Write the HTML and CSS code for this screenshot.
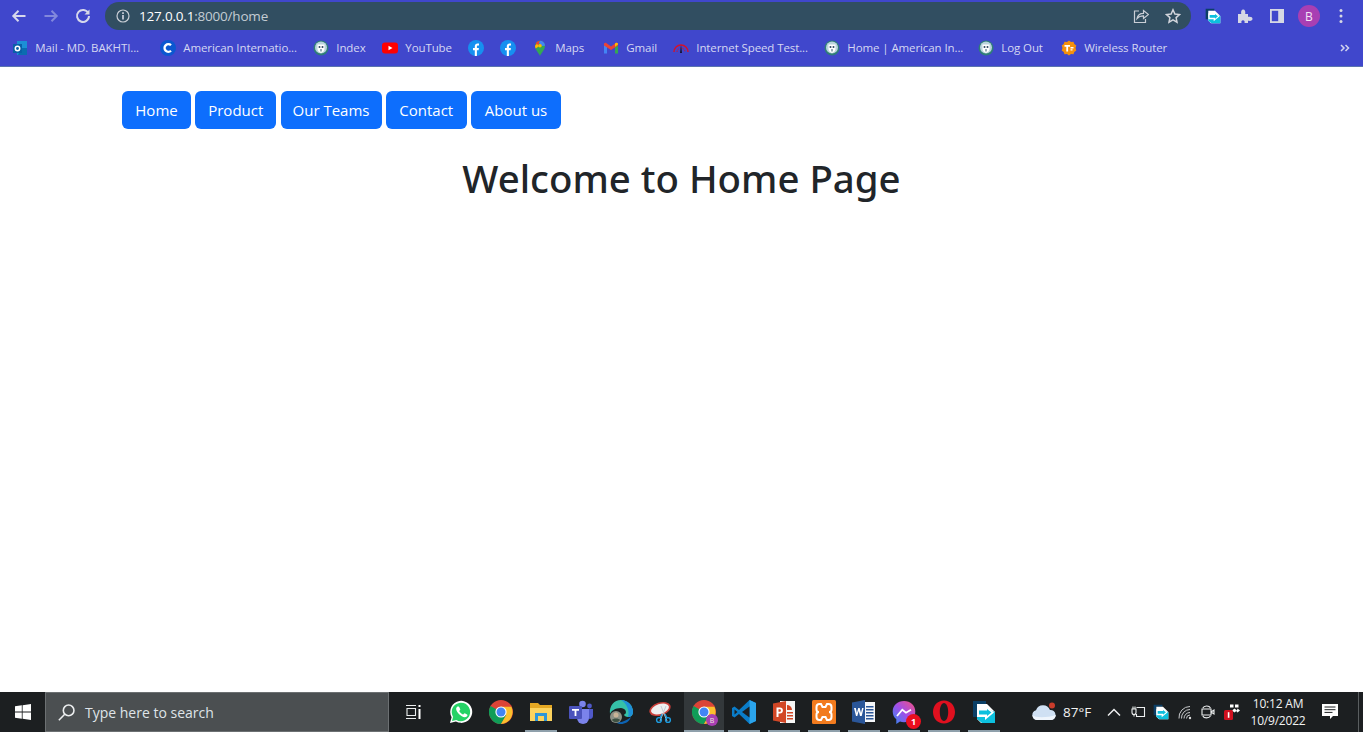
FILE: index.html
```html
<!DOCTYPE html>
<html lang="en">
<head>
<meta charset="utf-8">
<title>Home</title>
<link rel="stylesheet" href="styles.css">
</head>
<body>
<svg class="defs" width="0" height="0" aria-hidden="true">
  <defs>
    <symbol id="shield" viewBox="0 0 16 16">
      <circle cx="8" cy="8" r="7.500" fill="#2f7d78"/>
      <circle cx="8" cy="7.500" r="6" fill="#b9d3dc"/>
      <path d="M4.500 4.500h7v4.500c0 2-1.600 3-3.500 4-1.900-1-3.500-2-3.500-4z" fill="#fff"/>
      <circle cx="6.500" cy="7" r="1" fill="#2c4660"/>
      <circle cx="9.500" cy="7" r="1" fill="#2c4660"/>
      <path d="M7.200 9h1.600v2.500h-1.600z" fill="#7d97a8"/>
    </symbol>
    <symbol id="fb" viewBox="0 0 16 16">
      <circle cx="8" cy="8" r="8" fill="#1690f0"/>
      <path d="M6.800 16V10.300H5V8h1.800V6.300C6.800 4.400 7.900 3.400 9.600 3.400c.7 0 1.400.1 1.400.1v2h-.9c-.9 0-1.200.6-1.200 1.200V8h2l-.3 2.300H8.900V16z" fill="#fff"/>
    </symbol>
    <symbol id="chrome" viewBox="0 0 24 24">
      <circle cx="12" cy="12" r="12" fill="#db4437"/>
      <path d="M12 12 1.600 6A12 12 0 0 0 12 24l5.200-9z" fill="#0f9d58"/>
      <path d="M12 6.800h10.400A12 12 0 0 1 12 24l5.200-9z" fill="#fbc02d"/>
      <circle cx="12" cy="12" r="5.600" fill="#fff"/>
      <circle cx="12" cy="12" r="4.500" fill="#4285f4"/>
    </symbol>
    <symbol id="sendto" viewBox="0 0 24 24">
      <path d="M1 1h13v3H5v13H1z" fill="#0b3f66"/>
      <path d="M5 4h10l8 8v11H9l-4-4z" fill="#fff"/>
      <path d="M10 23l-5-4V14h7v-4l6 0 5 2v11z" fill="#0cc0de"/>
      <path d="M5 8h8V5l9 7.500-9 7.500v-3H5z" fill="#fff"/>
      <path d="M7 10.500h8V9l4.500 3.500L15 16v-1.500H7z" fill="#0cc0de"/>
    </symbol>
  </defs>
</svg>

<header class="chrome-bar">
  <div class="toolbar">
    <div class="nav-icons">
      <svg class="tool-icon" viewBox="0 0 16 16"><path d="M14.500 8H2.500M7.500 2.800 2.300 8l5.200 5.200" class="ln-light"/></svg>
      <svg class="tool-icon" viewBox="0 0 16 16"><path d="M1.500 8h12M8.500 2.800 13.700 8l-5.200 5.200" class="ln-dim"/></svg>
      <svg class="tool-icon" viewBox="0 0 16 16"><path d="M13.300 5.100A6 6 0 1 0 14 8" class="ln-light"/><path d="M14.500 1.500v5h-5z" class="fill-light"/></svg>
    </div>
    <div class="omnibox">
      <svg class="info-icon" viewBox="0 0 14 14"><circle cx="7" cy="7" r="6" class="ln-thin"/><path d="M6.200 6h1.600v4.500H6.200zM6.200 3.300h1.600v1.600H6.200z" class="fill-light"/></svg>
      <span class="url"><span class="url-host">127.0.0.1</span>:8000/home</span>
      <span class="omni-actions">
        <svg class="omni-icon" viewBox="0 0 16 16"><path d="M6 3H1.500v11.500h11V11" class="ln-thin"/><path d="M4 10.500c.6-3.300 3-5.200 6.500-5.200V2.500L15.500 6.500l-5 4V7.800C7.700 7.800 5.600 8.600 4 10.500z" class="ln-thin"/></svg>
        <svg class="omni-icon" viewBox="0 0 16 16"><path d="m8 1.800 1.900 4.200 4.600.5-3.400 3.100.9 4.600L8 11.900l-4 2.300.9-4.600L1.500 6.500l4.600-.5z" class="ln-star"/></svg>
      </span>
    </div>
    <div class="ext-icons">
      <svg class="ext-send" viewBox="0 0 24 24"><use href="#sendto"/></svg>
      <svg class="ext-puzzle" viewBox="0 0 16 16"><path d="M1 6h3.200c-.5-3 .4-4.500 2-4.500s2.500 1.500 2 4.500H11v2.800c3-.5 4.500.2 4.500 2s-1.500 2.500-4.500 2V15H7.500c.5-2-.2-2.800-1.500-2.800S4 13 4.500 15H1z" class="fill-light"/></svg>
      <svg class="ext-panel" viewBox="0 0 14 14"><path d="M0 0h14v14H0z" class="fill-light"/><path d="M1.800 1.800h6.400v10.400H1.800z" class="fill-bar"/></svg>
      <span class="avatar">B</span>
      <svg class="ext-dots" viewBox="0 0 4 16"><circle cx="2" cy="2.500" r="1.500" class="fill-light"/><circle cx="2" cy="8" r="1.500" class="fill-light"/><circle cx="2" cy="13.500" r="1.500" class="fill-light"/></svg>
    </div>
  </div>

  <nav class="bookmarks">
    <a class="bm"><svg class="bm-icon" viewBox="0 0 16 16"><path d="M5 1h10v14H5z" fill="#1c8fd6"/><path d="M9 8h6v7H6z" fill="#0b6cb0"/><path d="M1 4h9v9H1z" fill="#0a5ea8"/><circle cx="5.500" cy="8.500" r="2.200" fill="none" stroke="#fff" stroke-width="1.500"/></svg><span>Mail - MD. BAKHTI...</span></a>
    <a class="bm"><svg class="bm-icon" viewBox="0 0 16 16"><circle cx="8" cy="8" r="8" fill="#0b57d0"/><path d="M11 5.300a3.800 3.800 0 1 0 0 5.400" fill="none" stroke="#fff" stroke-width="2.300"/></svg><span>American Internatio...</span></a>
    <a class="bm"><svg class="bm-icon"><use href="#shield"/></svg><span>Index</span></a>
    <a class="bm"><svg class="bm-icon" viewBox="0 0 16 16"><rect y="2.500" width="16" height="11" rx="3" fill="#f00"/><path d="m6.500 5.700 4 2.300-4 2.300z" fill="#fff"/></svg><span>YouTube</span></a>
    <a class="bm"><svg class="bm-icon"><use href="#fb"/></svg></a>
    <a class="bm"><svg class="bm-icon"><use href="#fb"/></svg></a>
    <a class="bm"><svg class="bm-icon" viewBox="0 0 16 16"><path d="M8 16C6.800 12.800 3 10.300 3 5.800a5 5 0 0 1 10 0C13 10.300 9.200 12.800 8 16z" fill="#34a853"/><path d="M4.400 2.300A5 5 0 0 1 8 .8L5.500 7.500 3.200 7z" fill="#ea4335"/><path d="M8 .8a5 5 0 0 1 5 5L10 6 7 3z" fill="#4285f4"/><path d="M3 5.800c0 1 .3 2 .7 2.800L7 6 5 4z" fill="#fbbc04"/><circle cx="8" cy="5.800" r="1.800" fill="#fbbc04"/></svg><span>Maps</span></a>
    <a class="bm"><svg class="bm-icon" viewBox="0 0 16 16"><path d="M1 13.500V4.500l3 2.300v6.700z" fill="#4285f4"/><path d="M12 13.500V6.800l3-2.300v9z" fill="#34a853"/><path d="M1 3.500c.8-1 2-.8 2.600-.3L8 6.500l4.400-3.300c.6-.5 1.800-.7 2.600.3v2L8 10 1 5.500z" fill="#ea4335"/><path d="M12 6.800l3-2.300V3.500c-.8-1-2-.8-2.600-.3L12 3.500z" fill="#fbbc04"/></svg><span>Gmail</span></a>
    <a class="bm"><svg class="bm-icon" viewBox="0 0 16 16"><path d="M1 12a7 7 0 0 1 14 0" fill="none" stroke="#d5112b" stroke-width="1.500"/><path d="M4 12a4 4 0 0 1 8 0" fill="none" stroke="#d5112b" stroke-width="1" stroke-dasharray="1.500 1"/><path d="M7 13l1-8 1 8z" fill="#14142f"/></svg><span>Internet Speed Test...</span></a>
    <a class="bm"><svg class="bm-icon"><use href="#shield"/></svg><span>Home | American In...</span></a>
    <a class="bm"><svg class="bm-icon"><use href="#shield"/></svg><span>Log Out</span></a>
    <a class="bm"><svg class="bm-icon" viewBox="0 0 16 16"><path d="m8 .5 2 1.500 2.500-.3.800 2.300 2 1.500-.8 2.500.8 2.500-2 1.500-.8 2.300-2.500-.3L8 15.500l-2-1.500-2.500.3-.8-2.300-2-1.500.8-2.500-.8-2.500 2-1.500.8-2.300L6 2z" fill="#f4900c"/><path d="M3.500 5h5.500v1.700H7.100V11.500H5.300V6.700H3.500z" fill="#fff"/><path d="M9.500 7h3v1.500h-3zM9.500 9.300h2v1.300h-2z" fill="#fff"/></svg><span>Wireless Router</span></a>
    <svg class="bm-more" viewBox="0 0 10 10"><path d="M1 2l3 3-3 3M5.500 2l3 3-3 3" class="ln-more"/></svg>
  </nav>
</header>

<main class="page">
  <div class="nav-buttons">
    <a class="btn">Home</a>
    <a class="btn">Product</a>
    <a class="btn">Our Teams</a>
    <a class="btn">Contact</a>
    <a class="btn">About us</a>
  </div>
  <h1 class="title">Welcome to Home Page</h1>
</main>

<footer class="taskbar">
  <div class="start">
    <svg class="win-logo" viewBox="0 0 16 16"><path d="M0 2.300 6.800 1.300v6.300H0zM7.600 1.200 16 0v7.600H7.600zM0 8.400h6.800v6.300L0 13.700zM7.600 8.400H16V16L7.600 14.800z" fill="#fff"/></svg>
  </div>
  <div class="search">
    <svg class="search-icon" viewBox="0 0 16 16"><circle cx="10" cy="6" r="5" class="ln-white"/><path d="M6.300 9.700 .8 15.300" class="ln-white"/></svg>
    <span>Type here to search</span>
  </div>
  <div class="taskview">
    <svg class="taskview-icon" viewBox="0 0 16 16"><path d="M1 1.500h10M1 14.500h10M2 4.500h8.500v7H2z" class="ln-white-thin"/><path d="M13.500 1h2v2h-2zM13.500 5h2v10h-2z" fill="#fff"/></svg>
  </div>
  <div class="apps">
    <div class="app"><svg class="app-icon" viewBox="0 0 24 24"><path d="M1 23l1.600-5.800A11 11 0 1 1 6.900 21.500z" fill="#fff"/><path d="M3 21l1.100-4.200A9.200 9.200 0 1 1 7.300 19.900z" fill="#25d366"/><path d="M8.700 6.500c-.7.100-1.800 1.300-1.500 3 .4 2.300 4.700 7.500 8.600 7.700 1.700 0 2.700-1.300 2.700-2.300 0-.4-2.500-1.700-2.900-1.700-.4 0-1 1.200-1.500 1.300-1.100.1-3.600-2.300-3.800-3.400 0-.5 1-1 1-1.500s-1.200-3.100-1.600-3.100z" fill="#fff"/></svg></div>
    <div class="app"><svg class="app-icon"><use href="#chrome"/></svg></div>
    <div class="app is-open"><svg class="app-icon" viewBox="0 0 24 24"><path d="M1 3h8l2 2h12v16H1z" fill="#e5a823"/><path d="M1 8h22v13H1z" fill="#fcd35e"/><path d="M6 13h12v8h-3v-5H9v5H6z" fill="#2e96d8"/></svg></div>
    <div class="app"><svg class="app-icon" viewBox="0 0 24 24"><circle cx="13.500" cy="4" r="3.300" fill="#7b83eb"/><circle cx="20.500" cy="6" r="2.400" fill="#5059c9"/><path d="M18 9h6v7c0 2-1.500 3-3 3s-3-1-3-3z" fill="#5059c9"/><path d="M8 9h12v9a6 6 0 0 1-12 0z" fill="#7b83eb"/><rect y="6" width="13" height="13" rx="1" fill="#4b53bc"/><path d="M3 9h7v1.800H7.400V16H5.600v-5.200H3z" fill="#fff"/></svg></div>
    <div class="app"><svg class="app-icon" viewBox="0 0 24 24"><path d="M12 0a12 12 0 0 1 12 12c0 3-2 5-5 5-2 0-4-1-4-2.500 3 0 3-6-3-6.500C6 8 2 11 1 14 0 6 5 0 12 0z" fill="#35c1a8"/><path d="M12 0a12 12 0 0 1 12 12c0 3-2 5-5 5 2-5-1-14-7-17z" fill="#1f8fd8"/><path d="M22 17c-2 5-6 7-10 7-2 0-4-.6-5-2 5 1 10-1 15-5z" fill="#0c63b3"/><circle cx="7" cy="17" r="6" fill="#8d9186"/><path d="M3 20c1-2 7-2 8 0-2 3-6 3-8 0z" fill="#3e5143"/><circle cx="7" cy="15" r="2.500" fill="#c9b397"/></svg></div>
    <div class="app"><svg class="app-icon" viewBox="0 0 24 24"><ellipse cx="11" cy="9" rx="11" ry="6.500" fill="#c93f3a" transform="rotate(-18 11 9)"/><ellipse cx="11" cy="9" rx="9.300" ry="4.900" fill="#efeff0" transform="rotate(-18 11 9)"/><path d="M12 6l6 15M17 6l-6 15" stroke="#c4ccd6" stroke-width="1" fill="none"/><circle cx="10" cy="20" r="2.400" fill="none" stroke="#1d9ce0" stroke-width="1.400"/><circle cx="19" cy="20" r="2.400" fill="none" stroke="#1d9ce0" stroke-width="1.400"/><path d="M11 18l2-4M18 18l-2-4" stroke="#1d9ce0" stroke-width="1.400"/></svg></div>
    <div class="app is-active"><span class="badge-wrap"><svg class="app-icon"><use href="#chrome"/></svg><span class="chrome-badge">B</span></span></div>
    <div class="app is-open"><svg class="app-icon" viewBox="0 0 24 24"><path d="M17.500 0 24 3v18l-6.500 3L7 14l-4.500 3.500L0 16v-8l2.500-1.500L7 10z" fill="#0a7cc8"/><path d="M17.500 0 24 3v18l-6.500 3z" fill="#2ba4ec"/><path d="M17.500 6.500v11L10 12z" fill="#1c1f21"/><path d="M2.500 9.500v5L5.500 12z" fill="#1c1f21"/></svg></div>
    <div class="app is-open"><svg class="app-icon" viewBox="0 0 24 24"><path d="M8 1h15v22H8z" fill="#f6f6f6"/><path d="M15 5a5 5 0 0 1 5 5h-5z" fill="#d24726"/><path d="M15 12h6v1.500h-6zM15 15h6v1.500h-6zM15 18h6v1.500h-6z" fill="#d24726"/><path d="M1 3.500 14 1v22L1 20.500z" fill="#d24726"/><path d="M4.500 7.500h3.400c2 0 3 1 3 2.900s-1.200 3-3 3H6.500V17H4.500zm2 1.700v2.600h1.100c.9 0 1.300-.5 1.300-1.300s-.4-1.300-1.300-1.300z" fill="#fff"/></svg></div>
    <div class="app is-open"><svg class="app-icon" viewBox="0 0 24 24"><rect width="24" height="24" rx="1.500" fill="#f27b1e"/><path d="M4.500 7c0-2 1-3 3-3h1.500l1.500 3h3l1.500-3h1.500c2 0 3 1 3 3v2.500c0 1.200-1 2.500-2.500 2.500 1.500 0 2.500 1.300 2.500 2.500V17c0 2-1 3-3 3H15l-1.500-3h-3L9 20H7.500c-2 0-3-1-3-3v-2.500c0-1.200 1-2.500 2.500-2.500-1.500 0-2.500-1.300-2.500-2.500z" fill="none" stroke="#fff" stroke-width="2"/></svg></div>
    <div class="app is-open"><svg class="app-icon" viewBox="0 0 24 24"><path d="M9 2h14v20H9z" fill="#f4f6f9"/><path d="M14 6h7.500v1.500H14zM14 9h7.500v1.500H14zM14 12h7.500v1.500H14zM14 15h7.500v1.500H14zM14 18h7.500v1.500H14z" fill="#2a5699"/><path d="M0 2.500 13 0v24L0 21.500z" fill="#2a5699"/><path d="M2 8h1.800l1.100 5 1.300-5h1.500l1.300 5 1.100-5h1.500l-1.900 8H8l-1.300-5-1.400 5H4z" fill="#fff"/></svg></div>
    <div class="app is-open"><span class="badge-wrap"><svg class="app-icon" viewBox="0 0 24 24"><defs><linearGradient id="msg" x1="0" y1="1" x2="1" y2="0"><stop offset="0" stop-color="#2f8cf5"/><stop offset=".5" stop-color="#a24ee8"/><stop offset="1" stop-color="#f5517f"/></linearGradient></defs><path d="M12 1C5.500 1 .7 5.500.7 11.500c0 3.200 1.300 6 3.600 7.800V24l3.700-2.400c1.300.4 2.600.6 4 .6 6.500 0 11.300-4.700 11.300-10.700S18.500 1 12 1z" fill="url(#msg)"/><path d="M5 16l5.300-6.300 3.700 3 5-3" fill="none" stroke="#fff" stroke-width="1.800"/></svg><span class="msg-badge">1</span></span></div>
    <div class="app is-open"><svg class="app-icon" viewBox="0 0 24 24"><path fill-rule="evenodd" d="M12 .5c6.500 0 11 5 11 11.500s-4.500 11.500-11 11.500S1 18.500 1 12 5.500.5 12 .5zm0 2.500C9.500 3 7.800 7 7.800 12s1.700 9 4.200 9 4.200-4 4.200-9-1.700-9-4.200-9z" fill="#e0101f"/></svg></div>
    <div class="app is-open"><svg class="app-icon"><use href="#sendto"/></svg></div>
  </div>

  <div class="weather">
    <svg class="cloud" viewBox="0 0 26 20"><path d="M6 18a5 5 0 0 1-1-9.800A7.500 7.500 0 0 1 19 8a5 5 0 0 1 1 10z" fill="#cfe0f3"/><path d="M1.200 13C4 16 16 16 25 13c-.5 3-2.500 5-5 5H6c-2.500 0-4-2-4.800-5z" fill="#eff5fc"/><circle cx="21" cy="3.500" r="3" fill="#c93c2b"/></svg>
    <span>87°F</span>
  </div>
  <div class="tray">
    <svg class="tray-icon" viewBox="0 0 16 16"><path d="M2 11.500 8 5.500l6 6" class="ln-white"/></svg>
    <svg class="tray-icon" viewBox="0 0 16 16"><path d="M6.500 3.500h8v9h-8v-2.500M14.500 7v2.500M2 5v3.500a2 2 0 0 0 4 0V5zM3 2.500V5M5 2.500V5M4 10.500v2" class="ln-white-thin"/></svg>
    <svg class="tray-icon" viewBox="0 0 24 24"><use href="#sendto"/></svg>
    <svg class="tray-icon" viewBox="0 0 16 16"><path d="M2 14.500A11 11 0 0 1 13 2.500M4.500 14.500A8.500 8.500 0 0 1 13 5.500M7 14.500A6 6 0 0 1 13 8.500M9.500 14.500a3.500 3.500 0 0 1 3.500-3.500" class="ln-wifi"/><circle cx="13" cy="14" r="1.200" fill="#ddd"/></svg>
    <svg class="tray-icon" viewBox="0 0 16 16"><path d="M2.800 4C4 1.500 9 1 10.500 4M10.500 12c-1.500 2.500-6.500 2.500-7.700 0M2 5h9v6H2zM11 8l3-2v4z" class="ln-white-thin"/></svg>
    <svg class="tray-icon" viewBox="0 0 16 16"><path d="M6 .5h3.500v3H6zM11 .5h3.500v3H11zM8 6.500l2.500-2 2.500 2-2.500 2zM13.500 4.500l2.500 2-2.500 2-1-.8z" fill="#fff"/><rect y="6" width="9" height="10" rx="1.500" fill="#d0101f"/><path d="M3.800 8.200h1.600v5.600H3.800z" fill="#fff"/></svg>
  </div>
  <div class="clock"><span>10:12 AM</span><span>10/9/2022</span></div>
  <div class="notify">
    <svg class="notify-icon" viewBox="0 0 18 18"><path d="M1 1h16v12h-5l-3 3v-3H1z" fill="#fff"/><path d="M3.500 4h11M3.500 6.700h11M3.500 9.400h8" stroke="#1c1f21" stroke-width="1" fill="none"/></svg>
  </div>
  <div class="show-desktop"></div>
</footer>
</body>
</html>
```

FILE: styles.css
```css
* { box-sizing: border-box; }
html, body { height: 100%; }
body {
  margin: 0;
  height: 732px;
  overflow: hidden;
  display: flex;
  flex-direction: column;
  background: #fff;
  font-family: "Open Sans", "Noto Sans", "Liberation Sans", sans-serif;
}
.defs { position: absolute; }

/* Browser chrome */
.chrome-bar {
  flex: none;
  height: 67px;
  background: #4047cc;
  border-bottom: 1px solid #5a74b0;
  color: #dfe1f5;
}
.toolbar { height: 30px; padding-top: 2px; display: flex; align-items: stretch; }
.nav-icons { width: 105px; padding: 0 0 0 11px; display: flex; align-items: center; gap: 16px; }
.tool-icon { width: 16px; height: 16px; flex: none; }
.ln-light, .ln-dim, .ln-thin, .ln-star, .ln-more, .ln-white, .ln-white-thin, .ln-wifi { fill: none; }
.ln-light { stroke: #d6d8ec; stroke-width: 2; }
.ln-dim { stroke: #8288dc; stroke-width: 2; }
.ln-thin { stroke: #c9ced6; stroke-width: 1.2; }
.ln-star { stroke: #d2d5dc; stroke-width: 1.5; }
.ln-more { stroke: #d0d3ee; stroke-width: 1.500; }
.ln-white { stroke: #eceeef; stroke-width: 1.500; }
.ln-white-thin { stroke: #eceeef; stroke-width: 1.100; }
.ln-wifi { stroke: #c8cacc; stroke-width: 1; }
.fill-light { fill: #d6d8e4; }
.fill-bar { fill: #4047cc; }
.omnibox {
  width: 1086px;
  height: 28px;
  border-radius: 14px;
  background: #314e61;
  display: flex;
  align-items: center;
  padding-left: 11px;
  color: #c3ccd3;
  font-size: 13.500px;
}
.info-icon { width: 14px; height: 14px; flex: none; }
.url { margin-left: 9px; letter-spacing: -.2px; }
.url-host { color: #fff; }
.omni-actions { margin-left: auto; display: flex; gap: 16px; padding-right: 10px; }
.omni-icon { width: 16px; height: 16px; }
.ext-icons { flex: 1; display: flex; align-items: center; padding-left: 14px; }
.ext-send { width: 16px; height: 16px; flex: none; }
.ext-puzzle { width: 16px; height: 16px; margin-left: 16px; flex: none; }
.ext-panel { width: 14px; height: 14px; margin-left: 17px; flex: none; }
.avatar {
  width: 22px; height: 22px; margin-left: 14px;
  border-radius: 50%;
  background: #a83fb3;
  color: #f3e5f5;
  font-size: 12px;
  display: flex; align-items: center; justify-content: center;
  flex: none;
}
.ext-dots { width: 4px; height: 16px; margin-left: 19px; flex: none; }

.bookmarks {
  height: 35px;
  padding-left: 12px;
  display: grid;
  grid-template-columns: 148px 153px 69px 86px 32px 32px 71px 70px 151px 154px 83px 279px 10px;
  align-items: center;
  font-size: 11.500px;
  letter-spacing: -.1px;
}
.bm { display: flex; align-items: center; gap: 7.300px; white-space: nowrap; color: #d5d7f2; }
.bm-icon { width: 16px; height: 16px; flex: none; }
.bm-more { width: 10px; height: 10px; }

/* Page content */
.page { flex: 1; padding: 24px 0 0 122px; color: #212529; }
.nav-buttons { display: grid; grid-template-columns: 69px 81px 101px 81px 90px; gap: 4.250px; }
.btn {
  display: block;
  height: 38px;
  border-radius: 6px;
  background: #0d6efd;
  color: #fff;
  font-size: 15px;
  line-height: 38px;
  text-align: center;
}
.title {
  margin: 25px 0 0 -122px;
  text-align: center;
  font-family: "Noto Sans", "Open Sans", sans-serif;
  font-size: 38.400px;
  font-weight: 500;
  line-height: 48px;
}

/* Taskbar */
.taskbar {
  flex: none;
  height: 40px;
  background: #1c1f21;
  display: flex;
  align-items: stretch;
  color: #f2f2f2;
  position: relative;
}
.start { width: 45px; display: flex; align-items: center; justify-content: center; }
.win-logo { width: 16px; height: 16px; }
.search {
  width: 344px;
  background: #4b4f51;
  border: 1px solid #6c7072;
  display: flex;
  align-items: center;
  padding-left: 12px;
  gap: 10px;
  font-size: 14px;
  color: #dfe4e8;
}
.search-icon { width: 17px; height: 17px; flex: none; }
.taskview { width: 52px; padding-right: 4px; display: flex; align-items: center; justify-content: center; }
.taskview-icon { width: 16px; height: 16px; }
.apps { display: flex; }
.app {
  width: 40px;
  display: flex;
  align-items: center;
  justify-content: center;
  position: relative;
}
.app-icon { width: 24px; height: 24px; display: block; }
.is-open::after, .is-active::after {
  content: "";
  position: absolute;
  bottom: 0;
  left: 4px;
  right: 4px;
  height: 2px;
  background: #8fa0ab;
}
.is-active { background: #33383b; margin-left: 3px; }
.is-active::after { left: 0; right: 0; }
.badge-wrap { position: relative; display: block; }
.chrome-badge {
  position: absolute; right: -2px; bottom: -2px;
  width: 12px; height: 12px; border-radius: 50%;
  background: #a83fb3; color: #eed; font-size: 7px;
  display: flex; align-items: center; justify-content: center;
}
.msg-badge {
  position: absolute; right: -5px; bottom: -5px;
  width: 15px; height: 15px; border-radius: 50%;
  background: #ea0f1e; color: #fff; font-size: 9px; font-weight: 700;
  display: flex; align-items: center; justify-content: center;
}
.weather { width: 95px; padding-left: 20px; margin-left: 7px; display: flex; align-items: center; gap: 6px; font-size: 13.500px; }
.cloud { width: 26px; height: 20px; flex: none; }
.tray { display: flex; align-items: center; gap: 7.600px; width: 141px; }
.tray-icon { width: 16px; height: 16px; flex: none; }
.clock {
  width: 62px;
  display: flex; flex-direction: column; align-items: center; justify-content: center;
  gap: 3px;
  font-size: 12px;
  line-height: 14px;
  letter-spacing: -.2px;
  white-space: nowrap;
}
.notify { width: 49px; padding-right: 7px; display: flex; align-items: center; justify-content: center; }
.notify-icon { width: 18px; height: 18px; }
.show-desktop { flex: 1; border-left: 1px solid #5a5e60; }
```
